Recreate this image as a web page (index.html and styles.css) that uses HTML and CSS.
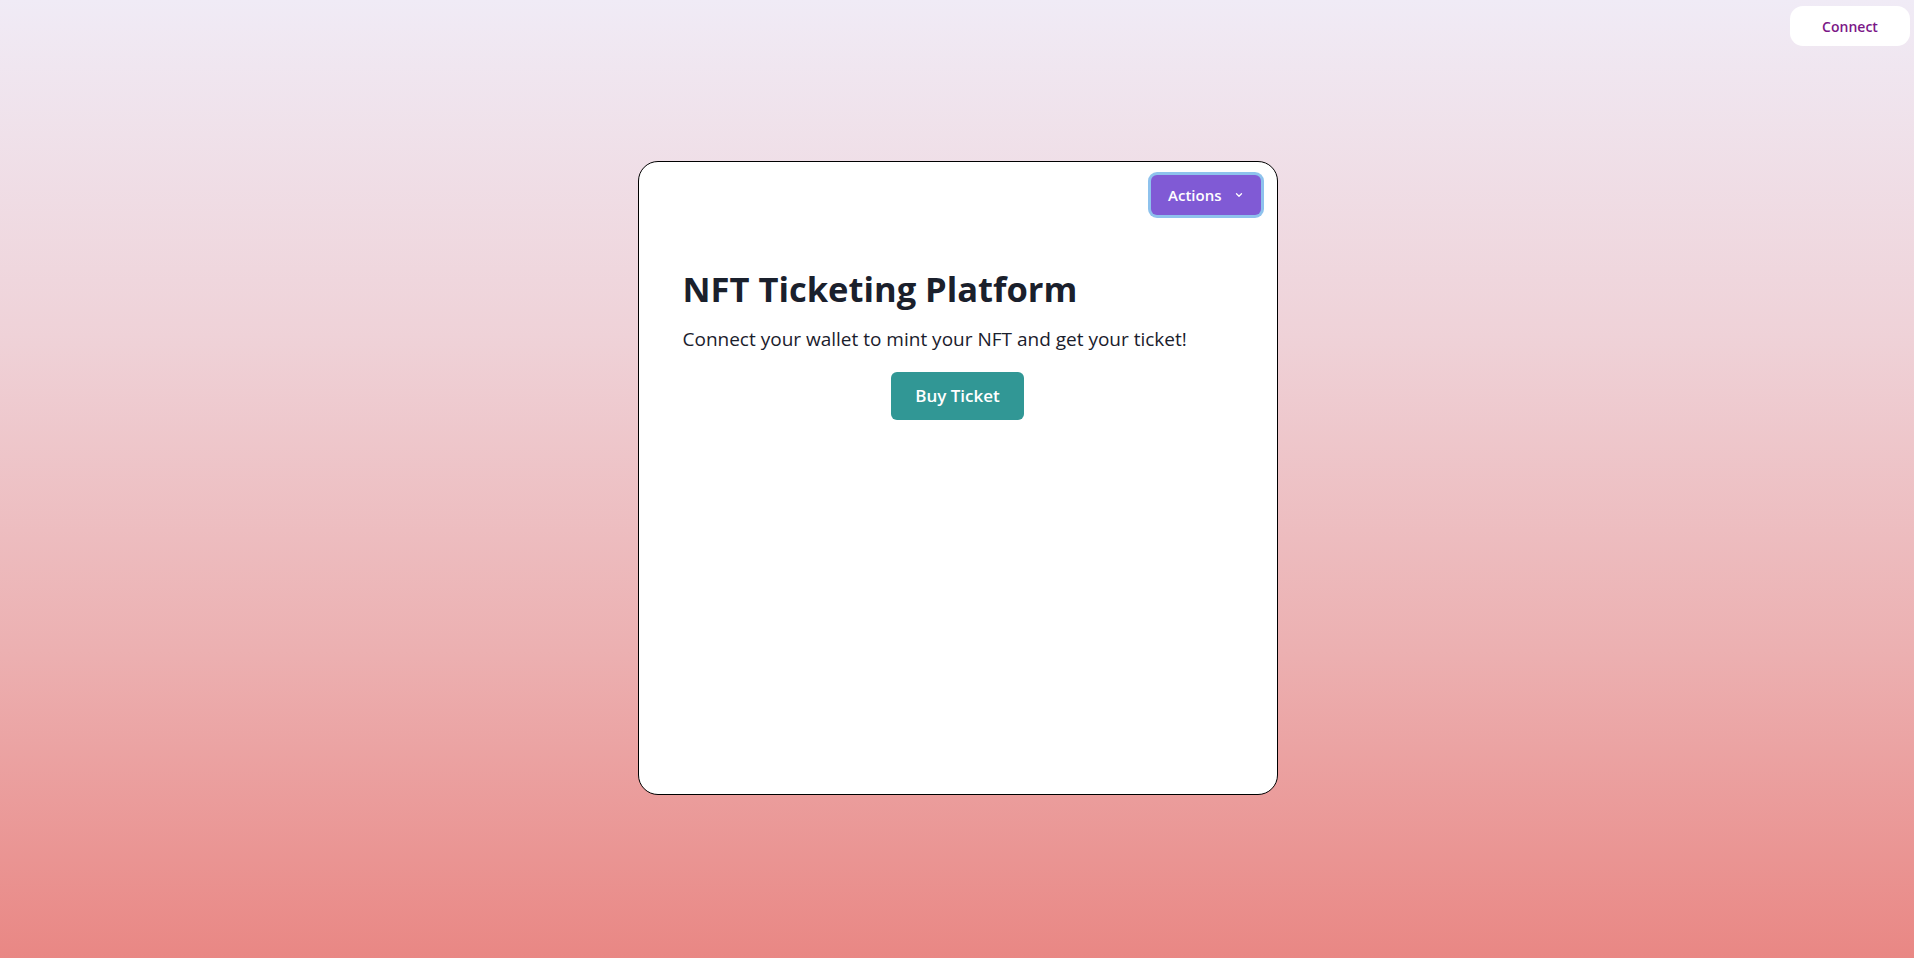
FILE: index.html
```html
<!DOCTYPE html>
<html lang="en">
<head>
<meta charset="utf-8">
<title>NFT Ticketing Platform</title>
<link rel="stylesheet" href="styles.css">
</head>
<body>
<div class="page">
  <button class="connect">Connect</button>
  <div class="card">
    <div class="card-top">
      <button class="actions">Actions
        <svg class="chev" width="10" height="10" viewBox="0 0 10 10"><path d="M2.5 3.8 L5 6.2 L7.5 3.8" fill="none" stroke="#fff" stroke-width="1.3" stroke-linecap="round" stroke-linejoin="round"/></svg>
      </button>
    </div>
    <div class="content">
      <h1 class="title">NFT Ticketing Platform</h1>
      <p class="lead">Connect your wallet to mint your NFT and get your ticket!</p>
      <div class="cta">
        <button class="buy">Buy Ticket</button>
      </div>
    </div>
  </div>
</div>
</body>
</html>
```

FILE: styles.css
```css
* { box-sizing: border-box; }
html, body { margin: 0; height: 100%; }
body {
  font-family: "Open Sans", "Noto Sans", sans-serif;
  color: #1a202c;
  background: linear-gradient(to bottom, #f0ebf6 0%, #efd2d8 35%, #ecb0b1 68%, #e98784 100%);
}
.page {
  position: relative;
  min-height: 100vh;
  display: grid;
  place-items: center;
}
.connect {
  position: absolute;
  top: 6px;
  right: 4px;
  width: 120px;
  height: 40px;
  border: none;
  border-radius: 13px;
  background: #fff;
  color: #7b1787;
  font-family: "Open Sans", sans-serif;
  font-size: 14px;
  font-weight: 600;
  cursor: pointer;
}
.card {
  width: 640px;
  height: 634px;
  margin-top: -2px;
  margin-left: 1px;
  background: #fff;
  border: 1px solid #000;
  border-radius: 20px;
  padding: 10px 13px;
  display: flex;
  flex-direction: column;
}
.card-top {
  display: flex;
  justify-content: flex-end;
}
.actions {
  height: 40px;
  padding: 0 17px 0 17px;
  display: flex;
  align-items: center;
  gap: 12px;
  background: #805ad5;
  color: #fff;
  border: none;
  border-radius: 6px;
  box-shadow: 0 0 0 3px rgba(66, 153, 225, 0.6);
  font-family: "Open Sans", sans-serif;
  font-size: 15px;
  font-weight: 600;
  margin: 3px;
}
.content {
  margin: 0 31px;
  padding-top: 50px;
}
.title {
  margin: 0;
  font-size: 34.5px;
  font-weight: 700;
  line-height: 1.2;
  color: #1a202c;
}
.lead {
  margin: 16px 0 0;
  font-size: 19px;
  line-height: 1.5;
  color: #1a202c;
}
.cta {
  display: flex;
  justify-content: center;
  margin-top: 18px;
}
.buy {
  height: 48px;
  padding: 0 24px;
  border: none;
  border-radius: 6px;
  background: #319795;
  color: #fff;
  font-family: "Open Sans", sans-serif;
  font-size: 17px;
  font-weight: 600;
}
```
